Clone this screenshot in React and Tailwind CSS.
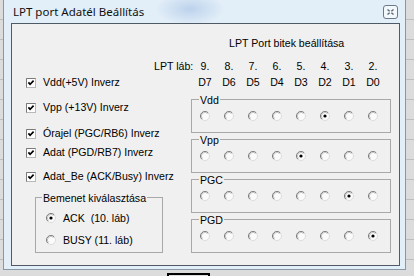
import React from "react";

const cols = ["9.", "8.", "7.", "6.", "5.", "4.", "3.", "2."];
const bits = ["D7", "D6", "D5", "D4", "D3", "D2", "D1", "D0"];

const groups = [
  { name: "Vdd", sel: 5 },
  { name: "Vpp", sel: 4 },
  { name: "PGC", sel: 6 },
  { name: "PGD", sel: 7 },
];

const checks = [
  { label: "Vdd(+5V) Inverz", mt: "mt-0" },
  { label: "Vpp (+13V) Inverz", mt: "mt-[13px]" },
  { label: "Órajel (PGC/RB6) Inverz", mt: "mt-[14px]" },
  { label: "Adat (PGD/RB7) Inverz", mt: "mt-[7px]" },
  { label: "Adat_Be (ACK/Busy) Inverz", mt: "mt-[12px]" },
];

const Radio = ({ on }) => (
  <svg width="10" height="10" viewBox="0 0 10 10" className="shrink-0 block">
    <circle cx="5" cy="5" r="4.5" fill="#fbfbfb" stroke="#dcdcdc" />
    <path d="M8.2 1.8 A4.5 4.5 0 0 0 1.8 8.2" fill="none" stroke="#7c7c7c" />
    <path d="M7.5 2.5 A3.5 3.5 0 0 0 2.5 7.5" fill="none" stroke="#c4c4c4" />
    {on && <circle cx="5" cy="5" r="1.6" fill="#000" />}
  </svg>
);

const Check = () => (
  <svg width="10" height="10" viewBox="0 0 10 10" className="shrink-0 block">
    <rect x="0.5" y="0.5" width="9" height="9" fill="#fff" stroke="#b8b8b8" />
    <path d="M0.5 9.5V0.5H9.5" stroke="#7a7a7a" fill="none" />
    <path d="M2.4 4.4 L4.1 6.3 L7.6 2.7" stroke="#000" strokeWidth="1.7" fill="none" />
  </svg>
);

// group box: the caption sits on the top edge, edge drawn in two pieces
const Box = ({ label, className, lead, children }) => (
  <div className={className}>
    <div className="h-[12px] flex">
      <div className={`${lead} mt-[6px] border-l border-t border-[#a8a8a8]`} />
      <span className="mt-[1px] px-[1px] leading-[12px] whitespace-nowrap">{label}</span>
      <div className="flex-1 mt-[6px] border-t border-r border-[#a8a8a8]" />
    </div>
    <div className="border-x border-b border-[#a8a8a8]">{children}</div>
  </div>
);

export default function App() {
  return (
    <div className="w-[414px] h-[276px] overflow-hidden bg-[#d8d8d8] bg-[repeating-linear-gradient(to_bottom,#dcdcdc_0,#dcdcdc_19px,#bdbdbd_19px,#bdbdbd_20px)] font-['Liberation_Sans',Arial,sans-serif] text-black">
      <div className="ml-[3px] w-[403px] h-[270px] flex flex-col border-x border-b border-[#8797a6] bg-[#e2eef8] bg-[radial-gradient(ellipse_34px_16px_at_186px_9px,#bcd2ec,transparent)]">
        <div className="h-[23px] shrink-0 flex items-start justify-between pl-[9px] pr-[7px]">
          <span className="mt-[5px] text-[11.5px] leading-[14px] font-['Noto_Sans',sans-serif] text-[#111]">
            LPT port Adatél Beállítás
          </span>
          <div className="mt-[5px] w-[15px] h-[14px] flex items-center justify-center rounded-[3px] border border-[#6d7986] bg-[#f3f8fc]">
            <svg width="7" height="6" viewBox="0 0 7 6" className="block">
              <path d="M0.5 0.5 L6.5 5.5 M6.5 0.5 L0.5 5.5" stroke="#5f6a75" strokeWidth="1.4" />
              <rect x="2.5" y="2" width="2" height="2" fill="#fff" />
            </svg>
          </div>
        </div>

        <div className="ml-[7px] w-[389px] h-[243px] flex border border-[#4f5a66] bg-[#f0f0f0] text-[10.6px] leading-[12px]">
          <div className="w-[140px] shrink-0 flex flex-col pt-[52px] pl-[14px]">
            {checks.map((c) => (
              <div key={c.label} className={`${c.mt} h-[12px] flex items-start gap-[7px] whitespace-nowrap`}>
                <div className="mt-[2px]">
                  <Check />
                </div>
                <span>{c.label}</span>
              </div>
            ))}

            <Box label="Bemenet kiválasztása" lead="w-[7px]" className="mt-[9px] ml-[9px] w-[128px]">
              <div className="flex flex-col gap-[12px] pl-[10px] pt-[10px] pb-[7px]">
                <div className="h-[10px] flex items-center gap-[7px] whitespace-pre">
                  <Radio on />
                  <span>ACK  (10. láb)</span>
                </div>
                <div className="h-[10px] flex items-center gap-[7px] whitespace-pre">
                  <Radio />
                  <span>BUSY (11. láb)</span>
                </div>
              </div>
            </Box>
          </div>

          <div className="w-[246px] flex flex-col pt-[13px]">
            <div className="pl-[77px] h-[12px] whitespace-nowrap">LPT Port bitek beállítása</div>
            <div className="mt-[11px] h-[12px] flex">
              <div className="w-[41px] pl-[2px] whitespace-nowrap">LPT láb:</div>
              {cols.map((c) => (
                <div key={c} className="w-[24px] text-center">{c}</div>
              ))}
            </div>
            <div className="mt-[4px] h-[12px] flex pl-[41px]">
              {bits.map((b) => (
                <div key={b} className="w-[24px] text-center">{b}</div>
              ))}
            </div>
            <div className="mt-[5px] flex flex-col">
              {groups.map((g) => (
                <Box key={g.name} label={g.name} lead="w-[8px]" className="ml-[39px] w-[200px]">
                  <div className="flex gap-[14px] pl-[8px] pt-[6px] pb-[11px]">
                    {bits.map((b, i) => (
                      <Radio key={b} on={i === g.sel} />
                    ))}
                  </div>
                </Box>
              ))}
            </div>
          </div>
        </div>
      </div>
      <div className="mt-[3px] ml-[167px] w-[43px] h-[10px] border-2 border-black" />
    </div>
  );
}
